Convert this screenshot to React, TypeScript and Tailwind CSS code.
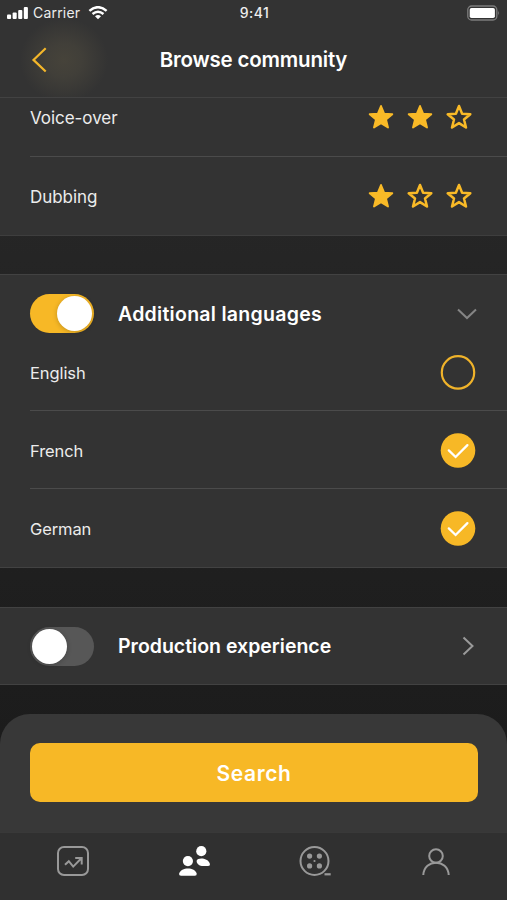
import React from 'react';

interface StarRowProps {
  label: string;
  rating: number;
}

interface LanguageRowProps {
  label: string;
  selected: boolean;
}

const StarIcon: React.FC<{ filled: boolean }> = ({ filled }) => (
  <svg width="39" height="28" viewBox="0 0 39 28" fill="none">
    <path
      d="M19 3 L22.1 10.7 L30.3 11.2 L24 16.5 L26 24.5 L19 20.1 L12 24.5 L14 16.5 L7.7 11.2 L15.9 10.7 Z"
      fill={filled ? '#f9ba27' : 'none'}
      stroke="#f9ba27"
      strokeWidth={filled ? 1.9 : 2.5}
      strokeLinejoin="round"
    />
  </svg>
);

const StarRow: React.FC<StarRowProps> = ({ label, rating }) => (
  <div className="flex h-full items-center justify-between pr-7">
    <span className="pt-[3px] text-[17px] tracking-[-0.05px] text-[#ececec]">{label}</span>
    <div className="flex">
      {[1, 2, 3].map((i) => (
        <StarIcon key={i} filled={i <= rating} />
      ))}
    </div>
  </div>
);

const LanguageRow: React.FC<LanguageRowProps> = ({ label, selected }) => (
  <div className="flex h-full items-center justify-between pr-[31px]">
    <span className="pt-[3px] text-[16.5px] tracking-[-0.1px] text-[#ececec]">{label}</span>
    {selected ? (
      <svg width="36" height="36" viewBox="0 0 36 36" fill="none">
        <circle cx="18" cy="18.5" r="17.3" fill="#f7b826" />
        <path d="M8.8 18.4 L15.6 25 L27.4 13.1" stroke="#fff" strokeWidth="2.3" strokeLinecap="round" />
      </svg>
    ) : (
      <svg width="36" height="36" viewBox="0 0 36 36" fill="none">
        <circle cx="18" cy="18.4" r="16.2" stroke="#f0b32a" strokeWidth="2.2" />
      </svg>
    )}
  </div>
);

const Toggle: React.FC<{ on: boolean }> = ({ on }) => (
  <div
    className={`flex h-[39px] w-16 items-center rounded-full px-0.5 ${
      on ? 'justify-end bg-[#f7b826]' : 'justify-start bg-[#575757]'
    }`}
  >
    <div className="size-[35px] rounded-full bg-white shadow-[0_1px_5px_rgba(0,0,0,0.22)]" />
  </div>
);

export default function App() {
  return (
    <div className="flex h-[900px] w-[507px] flex-col overflow-hidden bg-linear-to-b from-[#2a2a2a] to-[#191919] font-['Inter','Liberation_Sans',sans-serif] text-white">
      {/* Header */}
      <header className="h-[98px] shrink-0 border-b border-[#424242] bg-[#333333] bg-[radial-gradient(ellipse_44px_42px_at_64px_60px,#46433a_0%,#413f39_40%,transparent_100%)]">
        <div className="grid h-[26px] grid-cols-3 items-center pr-[7px] pl-[7px] text-[#ededed]">
          <div className="flex items-center">
            <svg width="22" height="14" viewBox="0 0 22 14" fill="#fff">
              <rect x="0" y="8.5" width="4.1" height="4.5" rx="1" />
              <rect x="5.6" y="6.5" width="4.1" height="6.5" rx="1" />
              <rect x="11.2" y="4" width="4.1" height="9" rx="1" />
              <rect x="16.8" y="1" width="4.1" height="12" rx="1" />
            </svg>
            <span className="ml-[4px] text-[14px] leading-none tracking-[0.2px]">Carrier</span>
            <svg className="ml-[8px]" width="20" height="14" viewBox="0 0 20 14" fill="none" stroke="#fff">
              <path d="M1.4 4.9 Q10 -2.5 18.6 4.9" strokeWidth="2.5" />
              <path d="M4.5 8 Q10 3.4 15.5 8" strokeWidth="2.4" />
              <path d="M10 13.2 L7 10.3 Q10 7.9 13 10.3 Z" fill="#fff" stroke="none" />
            </svg>
          </div>
          <span className="pl-0.5 text-center text-[14px] leading-none font-medium tracking-[0.5px]">9:41</span>
          <div className="flex justify-end">
            <svg width="33" height="16" viewBox="0 0 33 16" fill="none">
              <rect x="0.8" y="1" width="29" height="14" rx="3.8" stroke="#7c7c7c" strokeWidth="1.3" />
              <rect x="2.7" y="2.9" width="25.2" height="10.2" rx="1.8" fill="#fff" />
              <path d="M31.2 5.8 Q33 8 31.2 10.2 Z" fill="#7c7c7c" />
            </svg>
          </div>
        </div>
        <div className="grid h-[67px] grid-cols-[100px_1fr_100px] items-center">
          <svg className="ml-[31px]" width="18" height="28" viewBox="0 0 18 28" fill="none">
            <path d="M14.7 2.3 L2.5 13.9 L14.7 25.5" stroke="#f3b62a" strokeWidth="2.2" />
          </svg>
          <h1 className="pt-0.5 text-center text-[20.5px] font-semibold tracking-[-0.2px]">Browse community</h1>
        </div>
      </header>

      {/* Skills */}
      <section className="h-[138px] shrink-0 border-b border-[#3e3e3e] bg-[#333333] pl-[30px]">
        <div className="flex h-[59px] flex-col justify-end border-b border-[#4b4b4b]">
          <div className="-mt-5 h-[78px]">
            <StarRow label="Voice-over" rating={2} />
          </div>
        </div>
        <div className="h-[78px]">
          <StarRow label="Dubbing" rating={1} />
        </div>
      </section>

      {/* Languages */}
      <section className="mt-[38px] h-[294px] shrink-0 border-y border-[#424242] bg-[#333333] pl-[30px]">
        <div className="flex h-[77px] items-center pr-[29px]">
          <Toggle on />
          <h2 className="ml-6 flex-1 pt-0.5 text-[19.5px] font-semibold tracking-[0.28px]">Additional languages</h2>
          <svg width="22" height="14" viewBox="0 0 22 14" fill="none">
            <path d="M2 2.5 L11 11 L20 2.5" stroke="#858585" strokeWidth="2" />
          </svg>
        </div>
        <div className="h-[59px] border-b border-[#4b4b4b]">
          <div className="h-10">
            <LanguageRow label="English" selected={false} />
          </div>
        </div>
        <div className="h-[78px] border-b border-[#4b4b4b]">
          <LanguageRow label="French" selected />
        </div>
        <div className="h-[78px]">
          <LanguageRow label="German" selected />
        </div>
      </section>

      {/* Production */}
      <section className="mt-[39px] flex h-[78px] shrink-0 items-center border-y border-[#424242] bg-[#333333] pr-8 pl-[30px]">
        <Toggle on={false} />
        <h2 className="ml-6 flex-1 pt-0.5 text-[19.5px] font-semibold">Production experience</h2>
        <svg width="14" height="22" viewBox="0 0 14 22" fill="none">
          <path d="M2.5 2.5 L11.5 11 L2.5 19.5" stroke="#9a9a9a" strokeWidth="2" />
        </svg>
      </section>

      {/* Search */}
      <div className="mt-[29px] h-[118px] shrink-0 rounded-t-[30px] bg-[#383838] px-[30px] pt-[29px]">
        <button className="h-[59px] w-[448px] rounded-[10px] bg-[#f7b826] pt-0.5 text-[21px] font-semibold tracking-[0.6px]">Search</button>
      </div>

      {/* Tab bar */}
      <nav className="flex flex-1 items-start border-t border-[#393939] bg-[#303030] pt-3 pl-3">
        <div className="flex w-[121px] justify-center">
          <svg width="34" height="32" viewBox="0 0 34 32" fill="none" stroke="#999" strokeWidth="2">
            <rect x="2" y="2" width="30" height="28" rx="6" />
            <path d="M9 19.8 L12.8 16.2 L17.2 21.6 L25.4 13.2 M19.2 12.9 H25.7 V19.5" />
          </svg>
        </div>
        <div className="flex w-[121px] justify-center">
          <svg width="34" height="32" viewBox="0 0 34 32" fill="#fff">
            <circle cx="24.3" cy="6.2" r="5.1" />
            <circle cx="10.9" cy="16.1" r="5.1" />
            <path d="M19.7 15.5 C20.2 12.5 30.6 12.2 32.8 18.4 Q33.4 20.9 31 20.9 H24.8 C22 20.9 19.2 18 19.7 15.5 Z" />
            <path d="M2.1 28.7 C4 21.7 18 21.7 19.7 28.7 Q20 30.7 17.8 30.7 H4.1 Q1.8 30.7 2.1 28.7 Z" />
          </svg>
        </div>
        <div className="flex w-[121px] justify-center">
          <svg width="34" height="32" viewBox="0 0 34 32" fill="none">
            <circle cx="16.5" cy="16" r="14" stroke="#999" strokeWidth="2" />
            <g fill="#999">
              <circle cx="11.6" cy="11.1" r="2.6" />
              <circle cx="21.4" cy="11.1" r="2.6" />
              <circle cx="11.6" cy="20.9" r="2.6" />
              <circle cx="21.4" cy="20.9" r="2.6" />
              <circle cx="16.5" cy="16" r="1.1" />
              <rect x="26.5" y="28.2" width="6.2" height="2.2" />
            </g>
          </svg>
        </div>
        <div className="flex w-[121px] justify-center">
          <svg width="34" height="32" viewBox="0 0 34 32" fill="none" stroke="#999" strokeWidth="2">
            <circle cx="17" cy="11" r="6.8" />
            <path d="M4.3 30 C5 13.5 29 13.5 29.7 30" />
          </svg>
        </div>
      </nav>
    </div>
  );
}
